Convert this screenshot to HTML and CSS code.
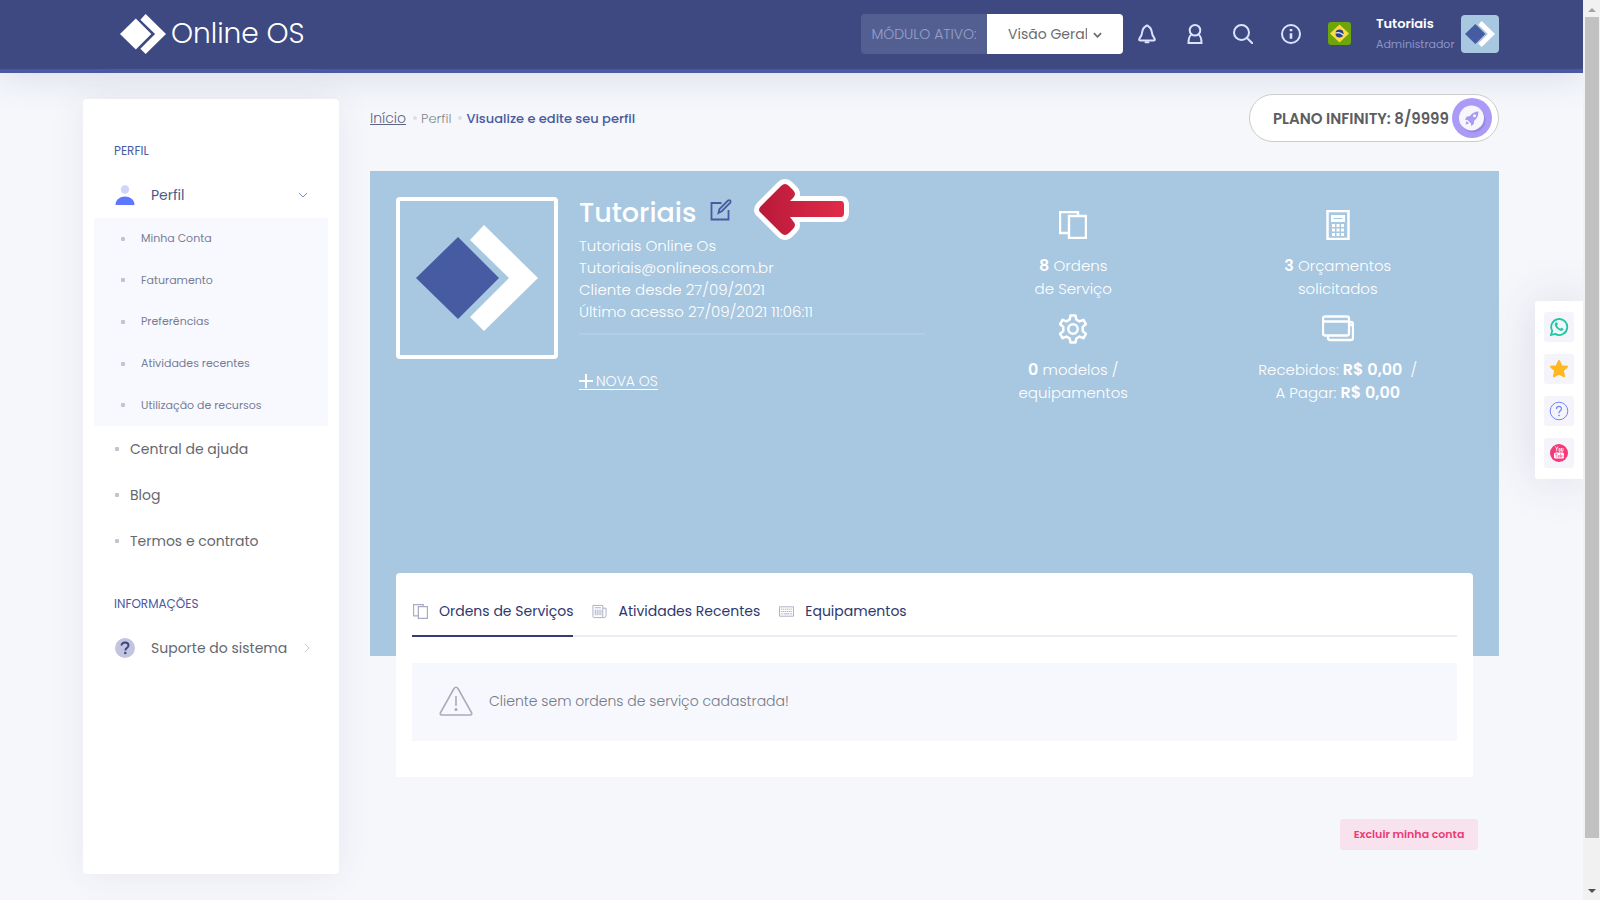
FILE: index.html
```html
<!DOCTYPE html>
<html lang="pt-BR">
<head>
<meta charset="utf-8">
<title>Online OS - Perfil</title>
<link rel="stylesheet" href="styles.css">
</head>
<body>
<svg class="defs" width="0" height="0" aria-hidden="true">
  <symbol id="brand" viewBox="0 0 122 106"><path class="brand-diamond" d="M42 12 83 53 42 94 0 53z"/><path class="brand-chevron" d="M54 15 68 0 122 53 68 106 54 92 93 53z"/></symbol>
  <symbol id="papers" viewBox="0 0 28 28"><path d="M10 22H1V1h18v4M10 5h17v22H10z" fill="none" stroke="currentColor" stroke-width="2.400"/></symbol>
</svg>

<div class="window">
<div class="page">
  <header class="topbar">
    <a class="logo" href="#"><svg class="logo-mark"><use href="#brand"/></svg><span>Online OS</span></a>
    <div class="tools">
      <div class="module">
        <label for="modulo">MÓDULO ATIVO:</label>
        <div class="select-wrap">
          <select id="modulo"><option>Visão Geral</option></select>
          <svg viewBox="0 0 10 6"><path d="M1 1l4 4 4-4"/></svg>
        </div>
      </div>
      <nav class="icons">
        <button aria-label="Notificações"><svg viewBox="0 0 20 20"><path d="M8.500 2.500Q10 .5 11.500 2.500C15 4 14.500 8 15.500 11l2 3.500q1 2-1 2h-13q-2 0-1-2l2-3.500C5.500 8 5 4 8.500 2.500z"/><path d="M8.500 18.300h3"/></svg></button>
        <button aria-label="Usuário"><svg viewBox="0 0 20 20"><circle cx="10" cy="6.300" r="5.300"/><path d="M6.500 10.500Q3.500 12.500 3.500 19h13Q16.500 12.500 13.500 10.500"/></svg></button>
        <button aria-label="Buscar"><svg viewBox="0 0 20 20"><circle cx="8.500" cy="8.500" r="7.500"/><path d="M14 14l5.500 5.500"/></svg></button>
        <button aria-label="Informações"><svg viewBox="0 0 20 20"><circle cx="10" cy="10" r="9"/><path class="thick" d="M10 9.200v5.600M10 5v2.200"/></svg></button>
        <button aria-label="Idioma"><svg class="flag" viewBox="0 0 23 23"><rect width="23" height="23" rx="3" fill="#6da50b"/><path d="M11.500 2.500 21 11.500 11.500 20.500 2 11.500z" fill="#ffda44"/><circle cx="11.500" cy="11.500" r="4" fill="#24418e"/><path d="M7.600 11Q12 9.500 15.200 13" fill="none" stroke="#f0f0f0" stroke-width="1.200"/></svg></button>
      </nav>
      <a class="user" href="#">
        <span><b>Tutoriais</b><small>Administrador</small></span>
        <span class="user-pic"><svg><use href="#brand"/></svg></span>
      </a>
    </div>
  </header>

  <div class="layout">
    <aside class="sidebar">
      <h2>PERFIL</h2>
      <a class="entry current" href="#"><svg class="entry-icon" viewBox="0 0 20 20"><circle cx="10" cy="4.500" r="4.200" fill="#cdd5fb"/><path d="M.5 20C.5 8.500 19.500 8.500 19.500 20z" fill="#5d78ff"/></svg><span>Perfil</span><svg class="caret open" viewBox="0 0 8 8"><path d="M0 2l4 4 4-4"/></svg></a>
      <ul class="submenu">
        <li><a href="#">Minha Conta</a></li>
        <li><a href="#">Faturamento</a></li>
        <li><a href="#">Preferências</a></li>
        <li><a href="#">Atividades recentes</a></li>
        <li><a href="#">Utilização de recursos</a></li>
      </ul>
      <ul class="menu">
        <li><a href="#">Central de ajuda</a></li>
        <li><a href="#">Blog</a></li>
        <li><a href="#">Termos e contrato</a></li>
      </ul>
      <h2>INFORMAÇÕES</h2>
      <a class="entry" href="#"><svg class="entry-icon" viewBox="0 0 20 20"><circle cx="10" cy="10" r="10" fill="#c3c5de"/><path d="M6.500 7.500C6.500 3.500 13.500 3.500 13.500 7.600 13.500 10 10.400 9.600 10.400 12.500" fill="none" stroke="#3a4482" stroke-width="1.900"/><circle cx="10.300" cy="15" r="1.200" fill="#3a4482"/></svg><span>Suporte do sistema</span><svg class="caret" viewBox="0 0 8 8"><path d="M2 0l4 4-4 4"/></svg></a>
    </aside>

    <main>
      <div class="heading">
        <nav class="crumbs"><a href="#">Início</a><i></i><span>Perfil</span><i></i><strong>Visualize e edite seu perfil</strong></nav>
        <button class="plan"><span>PLANO INFINITY: 8/9999</span>
          <svg viewBox="0 0 40 40"><circle cx="20" cy="20" r="20" fill="#ab9bf7"/><circle cx="21" cy="22" r="12.500" fill="#8478bd" opacity=".5"/><circle cx="19.500" cy="20" r="12.500" fill="#f7f6fd"/><path d="M26.500 13.500Q21 13.500 18 18l-3.500.8-1.500 3 2.500.2 3.500 3.500.2 2.500 2.500-1.800.5-3.500Q26.500 19.500 26.500 13.500zM14.500 23l2.500 2.500-3.500 1z" fill="#a99af4"/><circle cx="22.500" cy="17.800" r="1.500" fill="#f7f6fd"/></svg>
        </button>
      </div>

      <section class="hero">
        <div class="portrait"><svg><use href="#brand"/></svg></div>
        <div class="info">
          <h1>Tutoriais <a href="#" aria-label="Editar perfil"><svg viewBox="0 0 22 22"><path d="M11.500 4H1.500v16.500h17V11M8.500 14l1-4L18 1.500q2.800-1 2.500 1.800L12 12z"/></svg></a></h1>
          <p>Tutoriais Online Os</p>
          <p>Tutoriais@onlineos.com.br</p>
          <p>Cliente desde 27/09/2021</p>
          <p>Último acesso 27/09/2021 11:06:11</p>
          <hr>
          <a class="new-os" href="#"><svg viewBox="0 0 14 14"><path d="M7 0v14M0 7h14"/></svg> NOVA OS</a>
        </div>
        <div class="stats">
          <div><svg viewBox="0 0 30 30"><use href="#papers" x="1" y="1" width="28" height="28"/></svg><p><b>8</b> Ordens<br>de Serviço</p></div>
          <div><svg viewBox="0 0 30 30"><path d="M4.500 1h21v28h-21z" fill="none" stroke="currentColor" stroke-width="2.500"/><path d="M8 5h14v7H8z" fill="currentColor"/><path d="M10.500 8.500h9" stroke="#a8c7e0"/><path d="M9 15.500h12M9 20h12M9 24.500h12" stroke="currentColor" stroke-width="3" stroke-dasharray="3 1.500"/></svg><p><b>3</b> Orçamentos<br>solicitados</p></div>
          <div><svg viewBox="0 0 30 30" fill="none" stroke="currentColor" stroke-width="2.500" stroke-linejoin="round"><path d="M12.500 1.500h5l.8 4 3.200 1.900 3.900-1.500 2.500 4.300-3.200 2.700v4.200l3.200 2.700-2.500 4.300-3.900-1.500-3.200 1.900-.8 4h-5l-.8-4-3.200-1.900-3.900 1.500-2.500-4.300 3.200-2.700v-4.200l-3.200-2.700 2.500-4.300 3.900 1.500 3.200-1.900z"/><circle cx="15" cy="15" r="4.700"/></svg><p><b>0</b> modelos /<br>equipamentos</p></div>
          <div><svg class="wide" viewBox="0 0 32 30" fill="none" stroke="currentColor" stroke-width="2.300"><rect x="1" y="2.500" width="26" height="19" rx="2"/><path d="M1 7.500h26M27 8h2q2 0 2 2v14q0 2-2 2H8q-2 0-2-2v-2M27 11h4"/></svg><p>Recebidos: <b>R$ 0,00</b> &nbsp;/<br>A Pagar: <b>R$ 0,00</b></p></div>
        </div>
        <svg class="pointer" viewBox="0 0 96 64"><defs><linearGradient id="red"><stop stop-color="#b9193a"/><stop offset="1" stop-color="#e02c48"/></linearGradient></defs><path d="M7 28 27 8Q31 4 35 8L39 12Q43 16 39 20L36 23H87Q90 23 90 27V35Q90 39 87 39H36L39 43Q43 47 39 51L35 55Q31 59 27 55L7 35Q3 32 7 28z" fill="#fff" stroke="#fff" stroke-width="10" stroke-linejoin="round"/><path d="M7 28 27 8Q31 4 35 8L39 12Q43 16 39 20L36 23H87Q90 23 90 27V35Q90 39 87 39H36L39 43Q43 47 39 51L35 55Q31 59 27 55L7 35Q3 32 7 28z" fill="url(#red)"/></svg>
      </section>

      <section class="card">
        <div class="tabs" role="tablist">
          <button class="active" role="tab"><svg viewBox="0 0 28 28"><use href="#papers"/></svg>Ordens de Serviços</button>
          <button role="tab"><svg viewBox="0 0 16 16" fill="none" stroke="currentColor"><path d="M1 1.500h10.500v13H2.500q-1.500 0-1.500-1.500zM11.500 4.500h3.500v8q0 2-2 2h-1.500M3 4h6.500M3.500 6v6M5.500 6v6M7.500 6v6M9.500 6v6"/></svg>Atividades Recentes</button>
          <button role="tab"><svg viewBox="0 0 16 16" fill="none" stroke="currentColor"><path d="M.5 3h15v10H.5z"/><path d="M2 5.500h12M2 8h12" stroke-dasharray="1.500 .7"/><path d="M2 10.500h2M5 10.500h6M12 10.500h2"/></svg>Equipamentos</button>
        </div>
        <div class="alert"><svg viewBox="0 0 34 30"><path d="M15 2.500q2-2.500 4 0L32.500 26.500Q33.500 29 31 29H3Q.5 29 1.500 26.500z"/><path d="M17 10v10"/><circle cx="17" cy="23.500" r=".8"/></svg><span>Cliente sem ordens de serviço cadastrada!</span></div>
      </section>

      <button class="delete">Excluir minha conta</button>
    </main>
  </div>
</div>

<nav class="dock">
  <a href="#" aria-label="WhatsApp"><svg viewBox="0 0 20 20"><path d="M2 18l1.200-4.200A8 8 0 1 1 6.200 16.900z" fill="none" stroke="#1dc9a4" stroke-width="1.800"/><path d="M6.500 5.500q1.500-1.200 2.300 1.500l-.8 1.500q1 2.200 3.200 3.200l1.200-1q2.800.8 1.800 2.300-1.500 1.500-4 .2-3.500-1.800-4.300-4.700-.3-2 .6-3z" fill="#1dc9a4"/></svg></a>
  <a href="#" aria-label="Favoritos"><svg viewBox="0 0 20 20"><path d="M10 2l2.400 5.200 5.600.5-4.200 3.900 1.300 5.700-5.100-3-5.100 3 1.300-5.700L2 7.700l5.600-.5z" fill="#ffb822" stroke="#ffb822" stroke-width="2" stroke-linejoin="round"/></svg></a>
  <a href="#" aria-label="Ajuda"><svg viewBox="0 0 20 20" fill="none" stroke="#7386f5"><circle cx="10" cy="10" r="8.800"/><path d="M7.500 8C7.500 4.500 12.500 4.500 12.500 7.800 12.500 10 10 9.700 10 12.200" stroke-width="1.200"/><circle cx="10" cy="14.500" r=".5"/></svg></a>
  <a href="#" aria-label="YouTube"><svg viewBox="0 0 20 20"><circle cx="10" cy="10" r="9" fill="#f5397b"/><path d="M6.500 3.500l1.200 2.500L9 3.500M7.700 6v2.500M10 5.500h1.200v2.800H10zM12.500 5v3.300H14V5" fill="none" stroke="#fff" stroke-width=".8"/><rect x="5" y="9.500" width="10" height="6" rx="1.500" fill="#fff"/><path d="M6 11h2.500M7.200 11v3.500M9.200 12v2.200h1V12M11.500 10.500v3.700h1v-2M14 12v2" fill="none" stroke="#f5397b" stroke-width=".6"/></svg></a>
</nav>

<div class="scrollbar" aria-hidden="true"><svg viewBox="0 0 8 4"><path d="M0 4l4-4 4 4z" fill="#a3a3a3"/></svg><div class="thumb"></div><svg viewBox="0 0 8 4"><path d="M0 0l4 4 4-4z" fill="#505050"/></svg></div>
</div>
</body>
</html>
```
FILE: styles.css
```css
* { box-sizing: border-box; }
body, h1, h2, p, ul { margin: 0; padding: 0; }
ul { list-style: none; }
a { color: inherit; text-decoration: none; }
button, select { font: inherit; color: inherit; border: 0; background: none; padding: 0; }
button { cursor: pointer; }
svg { display: block; flex: none; }
.defs { position: absolute; }

body {
  font-family: Poppins, Inter, "Open Sans", sans-serif;
  font-size: 14px;
  font-weight: 300;
  color: #646c9a;
  background: #f5f7fb;
}
.window { display: flex; min-height: 100vh; }
.page { flex: 1; min-width: 0; }

/* Top bar */
.topbar {
  display: flex;
  align-items: center;
  justify-content: space-between;
  height: 73px;
  padding: 0 84px 2px 120px;
  background: #3d4980;
  border-bottom: 4px solid #4a5aa0;
  box-shadow: 0 4px 36px rgba(70, 90, 130, .16);
}
.brand-diamond { fill: var(--diamond, #fff); }
.brand-chevron { fill: #fff; }
.logo { display: flex; align-items: center; gap: 5px; color: #fff; font-size: 28px; font-weight: 300; }
.logo-mark { width: 46px; height: 40px; }
.tools { display: flex; align-items: center; }
.module { display: flex; height: 40px; border-radius: 4px; overflow: hidden; background: #535f91; color: #98a1cb; }
.module label { width: 126px; line-height: 40px; text-align: center; }
.select-wrap { position: relative; width: 136px; background: #fff; }
.select-wrap select { appearance: none; width: 100%; height: 40px; padding: 0 36px 0 21px; color: #6c6c70; font-weight: 400; }
.select-wrap svg { position: absolute; right: 21px; top: 18px; width: 9px; height: 6px; fill: none; stroke: #6c6c70; stroke-width: 2; pointer-events: none; }
.icons { display: flex; }
.icons button { display: grid; place-items: center; width: 48px; height: 48px; }
.icons svg { width: 20px; height: 20px; fill: none; stroke: #dde2ff; stroke-width: 2; stroke-linecap: round; }
.icons .thick { stroke-width: 2.6; stroke-linecap: butt; }
.icons .flag { width: 23px; height: 23px; stroke: none; }
.user { display: flex; align-items: center; gap: 8px; margin-left: 13px; }
.user > span:first-child { width: 77px; }
.user b { display: block; color: #fff; font-size: 13px; font-weight: 600; line-height: 20px; }
.user small { display: block; color: #8b96cb; font-size: 11px; font-weight: 400; line-height: 20px; }
.user-pic, .portrait { --diamond: #475ba3; display: grid; place-items: center; border-radius: 4px; background: #a8c7e0; }
.user-pic { width: 38px; height: 38px; }
.user-pic svg { width: 30px; height: 26px; }

/* Layout */
.layout { display: flex; gap: 31px; padding: 0 84px 26px 83px; }
.sidebar {
  width: 256px;
  min-height: 775px;
  margin-top: 26px;
  padding: 41px 10px;
  border-radius: 4px;
  background: #fff;
  box-shadow: 0 0 36px rgba(82, 63, 105, .08);
}
.sidebar h2 { padding-left: 21px; color: #4a5aa0; font-size: 12px; font-weight: 400; line-height: 22px; }
.entry { display: flex; align-items: center; gap: 16px; height: 46px; margin-top: 10px; padding: 0 22px; font-weight: 400; white-space: nowrap; }
.entry, .menu { color: #646870; }
.entry.current { color: #4d5985; }
.entry span { flex: 1; }
.entry-icon { width: 20px; height: 20px; }
.caret { width: 8px; height: 8px; fill: none; stroke: #c9cbd8; }
.caret.open { stroke: #7f8ed0; }
.submenu { display: grid; grid-auto-rows: 1fr; align-items: center; height: 208px; padding: 0 27px; margin: 0 1px; background: #f8f9fe; }
.submenu a { display: flex; align-items: center; gap: 16px; font-size: 11px; font-weight: 400; color: #777c96; }
.menu { padding: 0 22px; }
.menu a { display: flex; align-items: center; gap: 11px; height: 46px; font-weight: 400; }
.submenu a::before, .menu a::before { content: ""; width: 4px; height: 4px; border-radius: 1px; background: #c2c4d0; }
.menu + h2 { margin-top: 29px; }
main { flex: 1; min-width: 0; }

.heading { display: flex; align-items: center; justify-content: space-between; padding: 21px 0 29px; }
.crumbs { display: flex; align-items: baseline; font-size: 13px; color: #85868c; }
.crumbs a { color: #5e6488; font-size: 14px; text-decoration: underline; }
.crumbs i { align-self: center; width: 4px; height: 4px; margin: 0 4px 0 7px; border-radius: 50%; background: #dcdee8; }
.crumbs strong { color: #4a5aa0; font-weight: 500; }
.plan { display: flex; align-items: center; justify-content: space-between; width: 250px; height: 48px; padding: 0 6px 0 23px; border: 1px solid #ccc; border-radius: 24px; background: #fff; color: #5d5d60; font-size: 15px; font-weight: 600; white-space: nowrap; }
.plan svg { width: 40px; height: 40px; }

/* Profile banner */
.hero { position: relative; display: flex; gap: 21px; min-height: 485px; padding: 26px; background: #a8c7e0; color: #fff; }
.portrait { width: 162px; height: 162px; border: 4px solid #fff; }
.portrait svg { width: 122px; height: 106px; }
.info { width: 346px; font-size: 15px; line-height: 22px; }
.info h1 { display: flex; gap: 14px; height: 32px; margin-bottom: 6px; font-size: 27px; font-weight: 500; line-height: 32px; }
.info h1 svg { width: 22px; height: 22px; margin-top: 2px; fill: none; stroke: #475ba3; stroke-width: 1.8; }
.info hr { margin: 10px 0 37px; border: 0; border-top: 2px solid #b1cee5; }
.new-os { display: inline-flex; align-items: center; gap: 3px; border-bottom: 1px solid #fff; font-size: 14px; line-height: 16px; }
.new-os svg { width: 14px; height: 14px; stroke: #fff; stroke-width: 2; }
.stats { flex: 1; display: grid; grid-template-columns: 1fr 1fr; align-content: start; row-gap: 14px; padding: 13px 3px 0 0; margin-left: -5px; text-align: center; font-size: 15px; line-height: 23px; }
.stats svg { width: 30px; height: 30px; margin: 0 auto 14px; }
.stats .wide { width: 32px; }
.stats b { font-size: 16px; font-weight: 600; }
.pointer { position: absolute; left: 384px; top: 7px; width: 96px; height: 64px; overflow: visible; }

/* Orders card */
.card { position: relative; margin: -83px 26px 0; padding: 16px 16px 36px; border-radius: 4px 4px 0 0; background: #fff; }
.tabs { display: flex; gap: 18px; border-bottom: 2px solid #ebedf2; }
.tabs button { display: flex; align-items: center; gap: 11px; height: 48px; margin-bottom: -2px; padding: 0 0 1px 1px; color: #2f386e; font-size: 14px; font-weight: 400; border-bottom: 2px solid transparent; }
.tabs .active { border-bottom-color: #343d72; }
.tabs svg { width: 15px; height: 15px; color: #aaacc4; }
.alert { display: flex; align-items: center; gap: 16px; height: 78px; margin-top: 26px; padding: 0 27px 2px; background: #f7f8fd; color: #747887; }
.alert svg { width: 34px; height: 30px; fill: none; stroke: #a9abbb; stroke-width: 1.6; }
.delete { display: block; margin: 42px 21px 0 auto; width: 138px; height: 31px; border-radius: 3px; background: #f7e2ed; color: #ed3a74; font-size: 11px; font-weight: 600; }

/* Side shortcuts and window scrollbar */
.dock { position: fixed; right: 17px; top: 301px; display: grid; gap: 12px; padding: 11px 9px; border-radius: 3px 0 0 3px; background: #fff; box-shadow: 0 0 50px rgba(82, 63, 105, .15); }
.dock a { display: grid; place-items: center; width: 30px; height: 30px; border-radius: 3px; background: #f4f4fa; }
.dock svg { width: 20px; height: 20px; }
.scrollbar { position: sticky; top: 0; display: flex; flex-direction: column; align-items: center; width: 17px; height: 100vh; padding: 8px 1px 7px; background: #f1f1f1; z-index: 1; }
.scrollbar svg { width: 8px; height: 4px; }
.thumb { height: 821px; width: 14px; margin: 5px 0 auto; background: #c1c1c1; }
```
